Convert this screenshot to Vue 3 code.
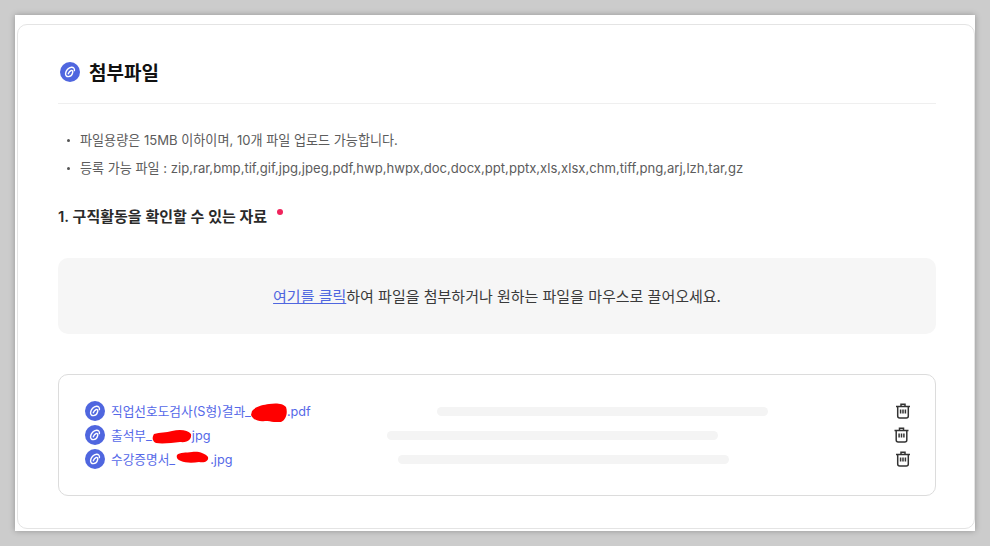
<script setup>
const clipPath = 'M8.3 11.8C8.8 10.4 10 9 11.2 8.5C12.5 8 13 9.2 12.7 10.5C12.2 12.6 10.3 14.6 8.3 14.6C6.5 14.6 5.3 13.2 5.6 11.4C6 8.6 8.5 5.4 11.5 5.2C13.5 5.1 14.8 6.6 14.4 8.6'
const files = [
  { id: 1, before: '직업선호도검사(S형)결과_', after: '.pdf', blobW: 36, barGap: 126, trashShift: 0, blob: 'M1 8C5 3 12 2 18 1C24 0 32 0 35 4C37 10 35 17 30 19C24 20 20 18 14 18C8 19 2 17 0 12Z' },
  { id: 2, before: '출석부_', after: 'jpg', blobW: 40, barGap: 177, trashShift: -1.5, blob: 'M2 7C8 5 14 6 20 4C28 2 36 3 39 7C40 12 36 16 28 15C20 16 10 17 4 16C0 14 0 10 2 7Z' },
  { id: 3, before: '수강증명서_', after: '.jpg', blobW: 35, barGap: 166, trashShift: 0, blob: 'M2 4C5 1 11 2 17 1C23 0 30 2 33 6C34 10 30 12 24 11C18 12 10 12 6 10C3 9 1 7 2 4Z' },
]
</script>

<template>
  <div class="page">
    <div class="panel">
      <section class="card">
        <header class="head">
          <svg class="clip large" viewBox="0 0 20 20" aria-hidden="true">
            <circle cx="10" cy="10" r="10" fill="#4F66DF" />
            <path :d="clipPath" fill="none" stroke="#fff" stroke-width="1.4" stroke-linecap="round" />
          </svg>
          <h2>첨부파일</h2>
        </header>

        <ul class="notes">
          <li>파일용량은 15MB 이하이며, 10개 파일 업로드 가능합니다.</li>
          <li>등록 가능 파일 : zip,rar,bmp,tif,gif,jpg,jpeg,pdf,hwp,hwpx,doc,docx,ppt,pptx,xls,xlsx,chm,tiff,png,arj,lzh,tar,gz</li>
        </ul>

        <h3 class="label">1. 구직활동을 확인할 수 있는 자료<i class="req"></i></h3>

        <div class="drop"><a href="#" @click.prevent>여기를 클릭</a>하여 파일을 첨부하거나 원하는 파일을 마우스로 끌어오세요.</div>

        <div class="files">
          <div v-for="f in files" :key="f.id" class="row">
            <svg class="clip" viewBox="0 0 20 20" aria-hidden="true">
              <circle cx="10" cy="10" r="10" fill="#4F66DF" />
              <path :d="clipPath" fill="none" stroke="#fff" stroke-width="1.4" stroke-linecap="round" />
            </svg>
            <span class="name">{{ f.before }}<svg class="blob" :style="{ width: f.blobW + 'px' }" :viewBox="`0 0 ${f.blobW} 19`" aria-hidden="true"><path :d="f.blob" fill="#FF0000" /></svg>{{ f.after }}</span>
            <span class="bar" :style="{ marginLeft: f.barGap + 'px' }"></span>
            <svg class="trash" :style="{ transform: `translateX(${f.trashShift}px)` }" viewBox="0 0 16 16" aria-hidden="true">
              <path d="M1 3.4H15M6 3V1.2H10V3M2.7 3.6V13C2.7 14.2 3.5 15 4.7 15H11.3C12.5 15 13.3 14.2 13.3 13V3.6" fill="none" stroke="#333" stroke-width="1.5" />
              <path d="M5.6 6.4V10.4M8 6.4V10.4M10.4 6.4V10.4" fill="none" stroke="#333" stroke-width="1.5" />
            </svg>
          </div>
        </div>
      </section>
    </div>
  </div>
</template>

<style>
html, body { margin: 0; background: #cccccc; }
</style>

<style scoped>
.page {
  width: 990px;
  height: 546px;
  box-sizing: border-box;
  padding: 15px;
  background: #cccccc;
  overflow: hidden;
  font-family: Inter, "Noto Sans CJK KR", "Noto Sans", sans-serif;
}
.panel {
  height: 516px;
  box-sizing: border-box;
  padding: 9px 0 2px 2px;
  background: #fff;
  box-shadow: 0 0 6px rgba(0, 0, 0, .28);
}
.card {
  height: 100%;
  box-sizing: border-box;
  padding: 0 38px 0 40px;
  border: 1px solid #e4e4e4;
  border-radius: 10px;
}
.head {
  height: 79px;
  box-sizing: border-box;
  padding-top: 15px;
  display: flex;
  align-items: center;
  gap: 9px;
  border-bottom: 1px solid #efefef;
}
.clip { width: 20px; height: 20px; flex: none; }
.clip.large { margin-left: 2px; }
h2 {
  margin: 0;
  font-size: 19px;
  font-weight: 700;
  color: #111;
}
.notes {
  list-style: none;
  margin: 22px 0 0;
  padding: 0 0 0 9px;
  font-size: 13.1px;
  line-height: 28px;
  color: #5c5c5c;
}
.notes li { display: flex; align-items: center; }
.notes li::before {
  content: "";
  width: 3px;
  height: 3px;
  margin-right: 10px;
  border-radius: 50%;
  background: #555;
}
.label {
  margin: 23px 0 0;
  font-size: 15px;
  line-height: 24px;
  font-weight: 600;
  color: #2a2a2a;
}
.req {
  display: inline-block;
  width: 6px;
  height: 6px;
  margin-left: 10px;
  vertical-align: 7px;
  border-radius: 50%;
  background: #f0245c;
}
.drop {
  height: 76px;
  box-sizing: border-box;
  margin-top: 29px;
  padding-bottom: 2px;
  display: flex;
  align-items: center;
  justify-content: center;
  border-radius: 10px;
  background: #f6f6f6;
  font-size: 15px;
  color: #3a3a3a;
}
.drop a { color: #4f66df; text-decoration: underline; }
.files {
  height: 122px;
  margin-top: 40px;
  box-sizing: border-box;
  padding: 24px 24px 0 26px;
  border: 1px solid #dcdcdc;
  border-radius: 10px;
}
.row {
  height: 24px;
  display: flex;
  align-items: center;
}
.name {
  margin-left: 6px;
  padding-bottom: 2px;
  font-size: 12.7px;
  color: #5568e8;
  white-space: nowrap;
}
.blob {
  height: 19px;
  vertical-align: middle;
  margin: -6px 0;
}
.bar {
  width: 331px;
  height: 9px;
  border-radius: 5px;
  background: #f4f4f4;
}
.trash {
  width: 16px;
  height: 16px;
  margin-left: auto;
  flex: none;
}
</style>
